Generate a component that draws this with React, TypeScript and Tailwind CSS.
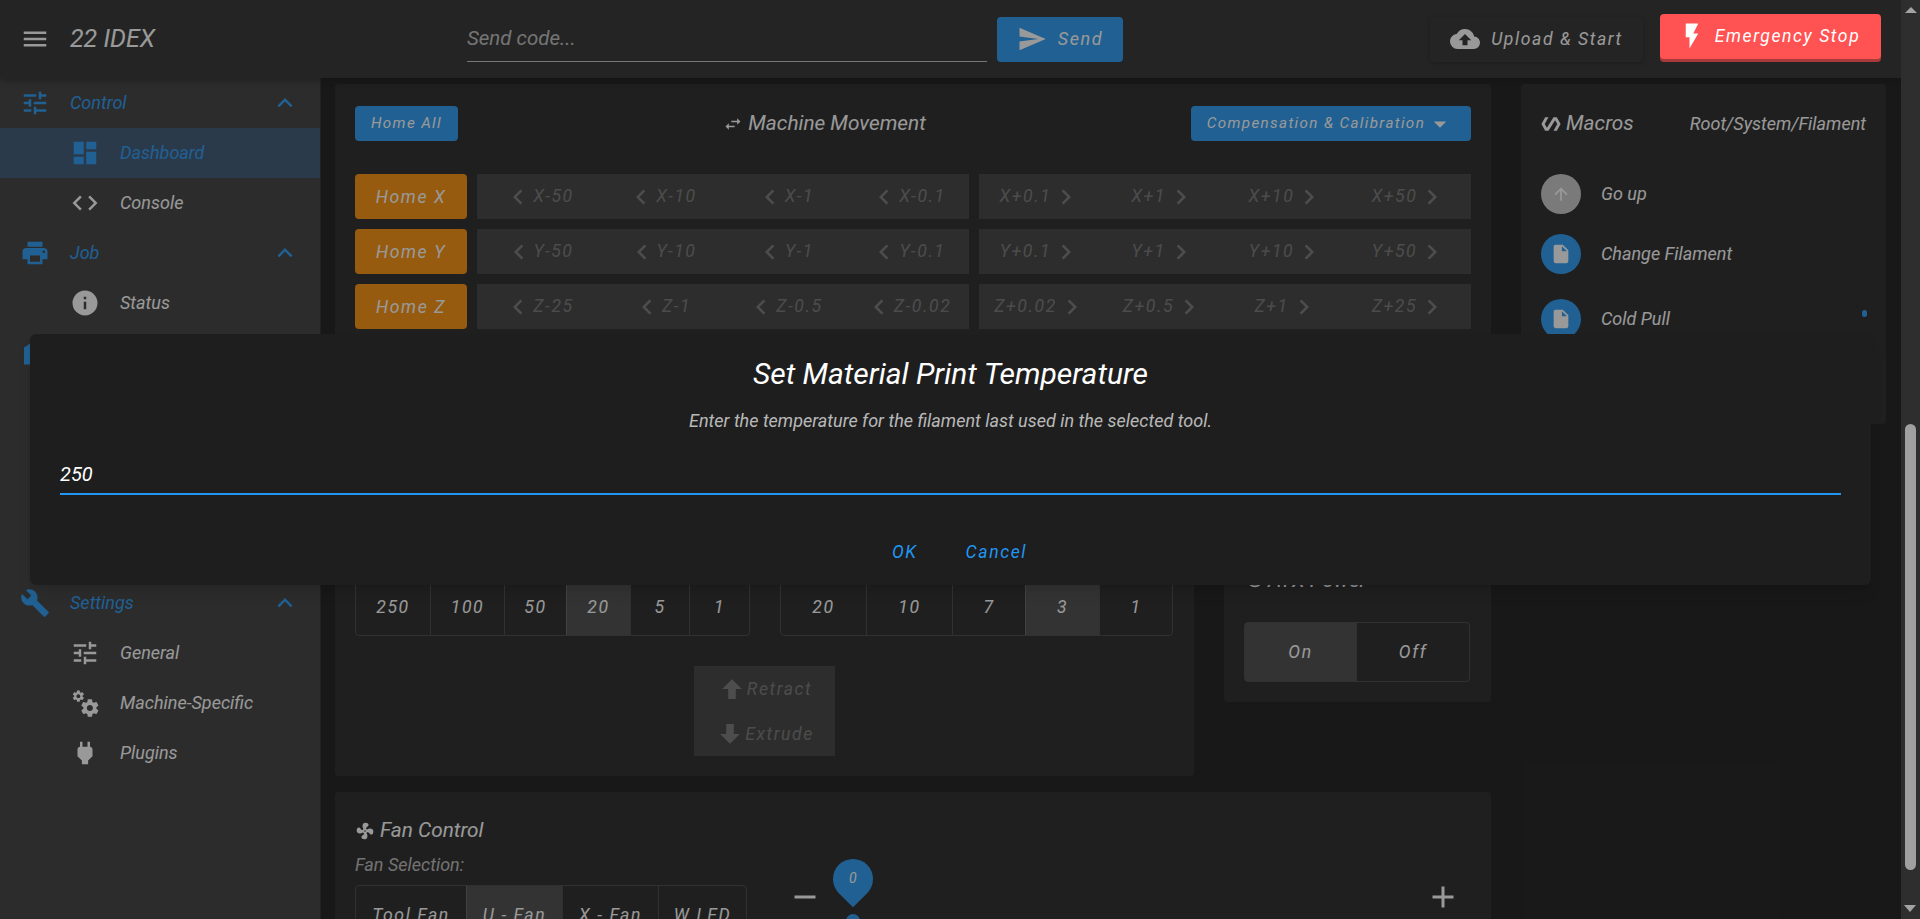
import React from "react";

// MDI icon paths
const mdi = {
  menu: "M3,6H21V8H3V6M3,11H21V13H3V11M3,16H21V18H3V16Z",
  tune: "M3,17V19H9V17H3M3,5V7H13V5H3M13,21V19H21V17H13V15H11V21H13M7,9V11H3V13H7V15H9V9H7M21,13V11H11V13H21M15,9H17V7H21V5H17V3H15V9Z",
  dashboard: "M13,3V9H21V3M13,21H21V11H13M3,21H11V15H3M3,13H11V3H3V13Z",
  code: "M14.6,16.6L19.2,12L14.6,7.4L16,6L22,12L16,18L14.6,16.6M9.4,16.6L4.8,12L9.4,7.4L8,6L2,12L8,18L9.4,16.6Z",
  printer: "M18,3H6V7H18M19,12A1,1 0 0,1 18,11A1,1 0 0,1 19,10A1,1 0 0,1 20,11A1,1 0 0,1 19,12M16,19H8V14H16M19,8H5A3,3 0 0,0 2,11V17H6V21H18V17H22V11A3,3 0 0,0 19,8Z",
  info: "M13,9H11V7H13M13,17H11V11H13M12,2A10,10 0 0,0 2,12A10,10 0 0,0 12,22A10,10 0 0,0 22,12A10,10 0 0,0 12,2Z",
  chevronUp: "M7.41,15.41L12,10.83L16.59,15.41L18,14L12,8L6,14L7.41,15.41Z",
  chevronLeft: "M15.41,16.58L10.83,12L15.41,7.41L14,6L8,12L14,18L15.41,16.58Z",
  chevronRight: "M8.59,16.58L13.17,12L8.59,7.41L10,6L16,12L10,18L8.59,16.58Z",
  wrench: "M22.7,19L13.6,9.9C14.5,7.6 14,4.9 12.1,3C10.1,1 7.1,0.6 4.7,1.7L9,6L6,9L1.6,4.7C0.4,7.1 0.9,10.1 2.9,12.1C4.8,14 7.5,14.5 9.8,13.6L18.9,22.7C19.3,23.1 19.9,23.1 20.3,22.7L22.6,20.4C23.1,20 23.1,19.3 22.7,19Z",
  cogs: "M15.9,18.45C17.25,18.45 18.35,17.35 18.35,16C18.35,14.65 17.25,13.55 15.9,13.55C14.54,13.55 13.45,14.65 13.45,16C13.45,17.35 14.54,18.45 15.9,18.45M21.1,16.68L22.58,17.84C22.71,17.95 22.75,18.13 22.66,18.29L21.26,20.71C21.17,20.86 21,20.92 20.83,20.86L19.09,20.16C18.73,20.44 18.33,20.67 17.91,20.85L17.64,22.7C17.62,22.87 17.47,23 17.3,23H14.5C14.32,23 14.18,22.87 14.15,22.7L13.89,20.85C13.46,20.67 13.07,20.44 12.71,20.16L10.96,20.86C10.81,20.92 10.62,20.86 10.54,20.71L9.14,18.29C9.05,18.13 9.09,17.95 9.22,17.84L10.7,16.68L10.65,16L10.7,15.31L9.22,14.16C9.09,14.05 9.05,13.86 9.14,13.71L10.54,11.29C10.62,11.13 10.81,11.07 10.96,11.13L12.71,11.84C13.07,11.56 13.46,11.32 13.89,11.15L14.15,9.29C14.18,9.13 14.32,9 14.5,9H17.3C17.47,9 17.62,9.13 17.64,9.29L17.91,11.15C18.33,11.32 18.73,11.56 19.09,11.84L20.83,11.13C21,11.07 21.17,11.13 21.26,11.29L22.66,13.71C22.75,13.86 22.71,14.05 22.58,14.16L21.1,15.31L21.15,16L21.1,16.68M6.69,8.07C7.56,8.07 8.26,7.37 8.26,6.5C8.26,5.63 7.56,4.92 6.69,4.92A1.58,1.58 0 0,0 5.11,6.5C5.11,7.37 5.82,8.07 6.69,8.07M10.03,6.94L11,7.68C11.07,7.75 11.09,7.87 11.03,7.97L10.13,9.53C10.08,9.63 9.96,9.67 9.86,9.63L8.74,9.18L8,9.62L7.81,10.81C7.79,10.92 7.7,11 7.59,11H5.79C5.67,11 5.58,10.92 5.56,10.81L5.4,9.62L4.64,9.18L3.5,9.63C3.41,9.67 3.3,9.63 3.24,9.53L2.34,7.97C2.28,7.87 2.31,7.75 2.39,7.68L3.34,6.94L3.31,6.5L3.34,6.06L2.39,5.32C2.31,5.25 2.28,5.13 2.34,5.03L3.24,3.47C3.3,3.37 3.41,3.33 3.5,3.37L4.63,3.82L5.4,3.38L5.56,2.19C5.58,2.08 5.67,2 5.79,2H7.59C7.7,2 7.79,2.08 7.81,2.19L8,3.38L8.74,3.82L9.86,3.37C9.96,3.33 10.08,3.37 10.13,3.47L11.03,5.03C11.09,5.13 11.07,5.25 11,5.32L10.03,6.06L10.06,6.5L10.03,6.94Z",
  plug: "M16,7V3H14V7H10V3H8V7H8C7,7 6,8 6,9V14.5L9.5,18V21H14.5V18L18,14.5V9C18,8 17,7 16,7Z",
  send: "M2,21L23,12L2,3V10L17,12L2,14V21Z",
  upload: "M14,13V17H10V13H7L12,8L17,13M19.35,10.03C18.67,6.59 15.64,4 12,4C9.11,4 6.6,5.59 5.35,8.03C2.34,8.36 0,10.9 0,14A6,6 0 0,0 6,20H19A5,5 0 0,0 24,15C24,12.36 21.95,10.22 19.35,10.03Z",
  flash: "M7,2V13H10V22L17,10H13L17,2H7Z",
  menuDown: "M7,10L12,15L17,10H7Z",
  file: "M13,9V3.5L18.5,9M6,2C4.89,2 4,2.89 4,4V20A2,2 0 0,0 6,22H18A2,2 0 0,0 20,20V8L14,2H6Z",
  arrowUp: "M13,20H11V8L5.5,13.5L4.08,12.08L12,4.16L19.92,12.08L18.5,13.5L13,8V20Z",
  swap: "M21,9L17,5V8H10V10H17V13M7,11L3,15L7,19V16H14V14H7V11Z",
  polymer: "M19,4H15L7.1,16.63L4.5,12L9,4H5L0.5,12L5,20H9L16.89,7.37L19.5,12L15,20H19L23.5,12L19,4Z",
  fan: "M12,11A1,1 0 0,0 11,12A1,1 0 0,0 12,13A1,1 0 0,0 13,12A1,1 0 0,0 12,11M12.5,2C17,2 17.11,5.57 14.75,6.75C13.76,7.24 13.32,8.29 13.13,9.22C13.61,9.42 14.03,9.73 14.35,10.13C18.05,8.13 22.03,8.92 22.03,12.5C22.03,17 18.46,17.1 17.28,14.73C16.78,13.74 15.72,13.3 14.79,13.11C14.59,13.59 14.28,14 13.88,14.34C15.87,18.03 15.08,22 11.5,22C7,22 6.91,18.42 9.27,17.24C10.25,16.75 10.69,15.71 10.89,14.79C10.4,14.59 9.97,14.27 9.65,13.87C5.96,15.85 2,15.07 2,11.5C2,7 5.56,6.89 6.74,9.26C7.24,10.25 8.29,10.68 9.22,10.87C9.41,10.39 9.73,9.97 10.14,9.65C8.15,5.96 8.94,2 12.5,2Z",
  arrowUpBold: "M15,20H9V12H4.16L12,4.16L19.84,12H15V20Z",
  arrowDownBold: "M9,4H15V12H19.84L12,19.84L4.16,12H9V4Z",
  minus: "M19,13H5V11H19V13Z",
  plus: "M19,13H13V19H11V13H5V11H11V5H13V11H19V13Z",
  // mostly behind the dialog, only its left sliver shows
  files: "M3.2,7.5L12,2L20.8,7.5V21.2H3.2Z",
  power: "M16.56,5.44L15.11,6.89C16.84,7.94 18,9.83 18,12A6,6 0 0,1 12,18A6,6 0 0,1 6,12C6,9.83 7.16,7.94 8.88,6.88L7.44,5.44C5.36,6.88 4,9.28 4,12A8,8 0 0,0 12,20A8,8 0 0,0 20,12C20,9.28 18.64,6.88 16.56,5.44M13,3H11V13H13",
};

function Icon({ d, className = "w-[30px] h-[30px]" }: { d: string; className?: string }) {
  return (
    <svg viewBox="0 0 24 24" fill="currentColor" className={`shrink-0 ${className}`}>
      <path d={d} />
    </svg>
  );
}

function NavGroup({ icon, label }: { icon: string; label: string }) {
  return (
    <div className="h-[50px] flex items-center pl-[20px] pr-[20px] text-[#2196f3]">
      <Icon d={icon} />
      <span className="ml-[20px] flex-1 text-lg">{label}</span>
      <Icon d={mdi.chevronUp} />
    </div>
  );
}

function NavItem({ icon, label, active }: { icon: string; label: string; active?: boolean }) {
  return (
    <div className={`h-[50px] flex items-center pl-[70px] ${active ? "bg-[#34506d] text-[#2196f3]" : "text-white"}`}>
      <Icon d={icon} />
      <span className="ml-[20px] text-lg">{label}</span>
    </div>
  );
}

const jogRows = [
  { axis: "X", down: ["-50", "-10", "-1", "-0.1"], up: ["+0.1", "+1", "+10", "+50"] },
  { axis: "Y", down: ["-50", "-10", "-1", "-0.1"], up: ["+0.1", "+1", "+10", "+50"] },
  { axis: "Z", down: ["-25", "-1", "-0.5", "-0.02"], up: ["+0.02", "+0.5", "+1", "+25"] },
];

function JogRow({ axis, down, up }: { axis: string; down: string[]; up: string[] }) {
  return (
    <div className="flex gap-[10px] h-[45px]">
      <button className="w-[112px] pt-[1px] rounded bg-[#fb8c00] text-white text-[17.6px] tracking-[.0892857em]">Home {axis}</button>
      <div className="flex-1 flex bg-[#393939] text-white/30">
        {down.map((v) => (
          <div key={v} className="flex-1 flex items-center justify-center text-[17.6px] tracking-[.0892857em]">
            <Icon d={mdi.chevronLeft} />
            {axis}
            {v}
          </div>
        ))}
      </div>
      <div className="flex-1 flex bg-[#393939] text-white/30">
        {up.map((v) => (
          <div key={v} className="flex-1 flex items-center justify-center text-[17.6px] tracking-[.0892857em]">
            {axis}
            {v}
            <Icon d={mdi.chevronRight} />
          </div>
        ))}
      </div>
    </div>
  );
}

function Toggle({ items, active, className }: { items: { label: string; w: string }[]; active: string; className: string }) {
  return (
    <div className={`flex border border-white/15 rounded ${className}`}>
      {items.map((it, i) => (
        <div
          key={it.label}
          className={`${it.w} flex items-center justify-center text-[17.6px] tracking-[.0892857em] text-white ${
            i > 0 ? "border-l border-white/15" : ""
          } ${it.label === active ? "bg-[#434343]" : ""}`}
        >
          {it.label}
        </div>
      ))}
    </div>
  );
}

function MacroRow({
  icon,
  label,
  grey,
  className,
  iconClass,
}: {
  icon: string;
  label: string;
  grey?: boolean;
  className: string;
  iconClass: string;
}) {
  return (
    <div className={`flex items-center ${className}`}>
      <div className={`w-10 h-10 rounded-full flex items-center justify-center text-white ${grey ? "bg-[#c6c6c6]" : "bg-[#2196f3]"}`}>
        <Icon d={icon} className={iconClass} />
      </div>
      <span className="ml-5 text-lg text-white">{label}</span>
    </div>
  );
}

export default function App() {
  return (
    <div className="relative flex w-[1920px] h-[919px] overflow-hidden italic font-['Roboto',sans-serif] bg-[#121212]">
      <div className="w-[1901px] h-full flex flex-col">
        {/* Toolbar */}
        <header className="relative shrink-0 h-[78px] bg-[#272727] flex items-center shadow-[0_2px_4px_-1px_rgba(0,0,0,.2),0_4px_5px_0_rgba(0,0,0,.14),0_1px_10px_0_rgba(0,0,0,.12)] text-white">
          <Icon d={mdi.menu} className="w-[30px] h-[30px] ml-[20px]" />
          <div className="ml-[20px] w-[397px] text-[25px]">22 IDEX</div>
          <div className="w-[520px] h-[45px] flex items-center border-b border-white/70 text-white/70 text-[20.5px]">Send code...</div>
          <button className="ml-[10px] w-[126px] h-[45px] rounded bg-[#2196f3] flex items-center justify-center text-lg tracking-[.0892857em]">
            <Icon d={mdi.send} className="w-[30px] h-[30px] mr-[11px]" />
            Send
          </button>
          <button className="ml-[307px] w-[213px] h-[45px] rounded bg-[#272727] shadow-[0_1px_4px_rgba(0,0,0,.4)] flex items-center justify-center text-[17.6px] tracking-[.0892857em]">
            <Icon d={mdi.upload} className="w-[30px] h-[30px] mr-[11px]" />
            Upload &amp; Start
          </button>
          <button className="relative z-20 ml-[17px] mb-[6px] w-[221px] h-[45px] rounded bg-[#ff5252] shadow-[0_3px_0_#a83a3a] flex items-center justify-center pr-[4px] text-[17.6px] tracking-[.0892857em]">
            <Icon d={mdi.flash} className="w-[30px] h-[30px] mr-[8px]" />
            Emergency Stop
          </button>
        </header>

        <div className="flex-1 flex min-h-0">
          {/* Sidebar */}
          <nav className="w-[321px] shrink-0 bg-[#363636] border-r border-[#222]">
            <NavGroup icon={mdi.tune} label="Control" />
            <NavItem icon={mdi.dashboard} label="Dashboard" active />
            <NavItem icon={mdi.code} label="Console" />
            <NavGroup icon={mdi.printer} label="Job" />
            <NavItem icon={mdi.info} label="Status" />
            <NavGroup icon={mdi.files} label="Files" />
            <div className="h-[200px]" />
            <NavGroup icon={mdi.wrench} label="Settings" />
            <NavItem icon={mdi.tune} label="General" />
            <NavItem icon={mdi.cogs} label="Machine-Specific" />
            <NavItem icon={mdi.plug} label="Plugins" />
          </nav>

          {/* Main */}
          <main className="flex-1 min-w-0 flex gap-[30px] pl-[14px] pt-[6px] overflow-hidden text-white">
            <div className="w-[1156px] shrink-0 flex flex-col gap-[16px]">
              <section className="h-[316px] shrink-0 rounded bg-[#1e1e1e] px-[20px] pt-[22px]">
                <div className="flex items-center justify-between h-[35px]">
                  <button className="w-[103px] h-[35px] rounded bg-[#2196f3] text-[15.2px] tracking-[.0892857em]">Home All</button>
                  <div className="flex items-center text-[20.8px]">
                    <Icon d={mdi.swap} className="w-5 h-5 mr-[5px]" />
                    Machine Movement
                  </div>
                  <button className="w-[280px] h-[35px] rounded bg-[#2196f3] flex items-center justify-center text-[15.2px] tracking-[.0892857em]">
                    Compensation &amp; Calibration
                    <Icon d={mdi.menuDown} />
                  </button>
                </div>
                <div className="mt-[33px] flex flex-col gap-[10px]">
                  {jogRows.map((r) => (
                    <JogRow key={r.axis} {...r} />
                  ))}
                </div>
              </section>

              <div className="h-[360px] shrink-0 flex items-start gap-[30px]">
                <section className="w-[859px] h-full rounded bg-[#1e1e1e] px-[20px] pb-[20px] flex flex-col justify-end">
                  <div className="flex gap-[30px]">
                    <Toggle
                      className="w-[395px] h-[58px]"
                      active="20"
                      items={[
                        { label: "250", w: "w-[74px]" },
                        { label: "100", w: "w-[74px]" },
                        { label: "50", w: "w-[62px]" },
                        { label: "20", w: "w-[64px]" },
                        { label: "5", w: "w-[59px]" },
                        { label: "1", w: "w-[60px]" },
                      ]}
                    />
                    <Toggle
                      className="w-[393px] h-[58px]"
                      active="3"
                      items={[
                        { label: "20", w: "w-[85px]" },
                        { label: "10", w: "w-[86px]" },
                        { label: "7", w: "w-[73px]" },
                        { label: "3", w: "w-[74px]" },
                        { label: "1", w: "w-[73px]" },
                      ]}
                    />
                  </div>
                  <div className="mt-[30px] ml-[339px] w-[141px] h-[90px] bg-[#393939] text-white/30 text-[17.6px] tracking-[.0892857em]">
                    <div className="h-[45px] pt-[1px] flex items-center justify-center">
                      <Icon d={mdi.arrowUpBold} />
                      Retract
                    </div>
                    <div className="h-[45px] pt-[1px] flex items-center justify-center">
                      <Icon d={mdi.arrowDownBold} />
                      Extrude
                    </div>
                  </div>
                </section>
                <section className="w-[267px] h-[286px] rounded bg-[#1e1e1e] px-[20px] pb-[20px] flex flex-col justify-end">
                  <div className="flex items-center text-[20.8px] mb-[26px]">
                    <Icon d={mdi.power} className="w-[22px] h-[22px] mr-[2px]" />
                    ATX Power
                  </div>
                  <Toggle
                    className="w-[226px] h-[60px]"
                    active="On"
                    items={[
                      { label: "On", w: "w-[111px]" },
                      { label: "Off", w: "w-[113px]" },
                    ]}
                  />
                </section>
              </div>

              <section className="h-[140px] shrink-0 rounded bg-[#1e1e1e] px-[20px] pt-[27px]">
                <div className="flex items-center text-[20.8px] h-6">
                  <Icon d={mdi.fan} className="w-5 h-5 mr-[5px]" />
                  Fan Control
                </div>
                <div className="mt-[10px] text-lg leading-[24px] text-white/70">Fan Selection:</div>
                <div className="flex">
                  <Toggle
                    className="mt-[8px] w-[392px] h-[60px] shrink-0"
                    active="U - Fan"
                    items={[
                      { label: "Tool Fan", w: "w-[110px]" },
                      { label: "U - Fan", w: "w-[96px]" },
                      { label: "X - Fan", w: "w-[96px]" },
                      { label: "W LED", w: "w-[88px]" },
                    ]}
                  />
                  <div className="relative flex-1 flex justify-between items-start pl-[40px] pr-[10px]">
                    <Icon d={mdi.minus} className="w-9 h-9 mt-[2px]" />
                    <Icon d={mdi.plus} className="w-9 h-9 mt-[2px]" />
                    {/* slider thumb label */}
                    <div className="absolute left-[86px] top-[-18px] w-10 h-10 rounded-full rounded-br-none rotate-45 bg-[#2196f3]" />
                    <span className="absolute left-[102px] top-[-9px] text-sm leading-5">0</span>
                    <div className="absolute left-[99px] top-[37px] w-[14px] h-[14px] rounded-full bg-[#2196f3]" />
                  </div>
                </div>
              </section>
            </div>

            <section className="w-[365px] h-[340px] shrink-0 rounded bg-[#1e1e1e] px-[20px] pt-[22px] relative">
              <div className="flex items-center justify-between h-[35px] text-lg">
                <div className="flex items-center text-[20.8px]">
                  <Icon d={mdi.polymer} className="w-5 h-5 mr-[5px]" />
                  Macros
                </div>
                <span className="text-lg">Root/System/Filament</span>
              </div>
              <MacroRow icon={mdi.arrowUp} iconClass="w-5 h-5" label="Go up" grey className="mt-[33px]" />
              <MacroRow icon={mdi.file} iconClass="w-[22px] h-[22px]" label="Change Filament" className="mt-[20px]" />
              <MacroRow icon={mdi.file} iconClass="w-[22px] h-[22px]" label="Cold Pull" className="mt-[25px]" />
              <div className="absolute left-[341px] top-[226px] w-[5px] h-[7px] rounded-full bg-[#2196f3]" />
            </section>
          </main>
        </div>
      </div>

      {/* Scrollbar */}
      <div className="relative w-[19px] h-full bg-[#2e2e2e]">
        <div className="absolute left-[4px] top-[7px] w-0 h-0 border-x-[6px] border-x-transparent border-b-[6px] border-b-[#a3a3a3]" />
        <div className="absolute left-[4px] top-[424px] w-[11px] h-[446px] rounded-full bg-[#a0a0a0]" />
        <div className="absolute left-[3px] top-[905px] w-0 h-0 border-x-[6.5px] border-x-transparent border-t-[7px] border-t-[#a3a3a3]" />
      </div>

      {/* Dialog overlay */}
      <div className="absolute left-0 top-0 w-[1901px] h-full z-10 bg-[#212121]/46 flex items-center justify-center">
        <div className="w-[1841px] h-[251px] rounded-md bg-[#1e1e1e] shadow-lg text-white flex flex-col">
          <h2 className="pt-[20px] text-center text-[30px] leading-[40px]">Set Material Print Temperature</h2>
          <p className="mt-[15px] text-center text-lg leading-6 text-white/70">Enter the temperature for the filament last used in the selected tool.</p>
          <div className="mx-[30px] mt-[22px] h-[40px] flex items-center border-b-2 border-[#2196f3] text-xl">250</div>
          <div className="flex justify-center gap-[48px] mt-[44px] pl-[18px] text-[#2196f3] text-[17.6px] tracking-[.0892857em]">
            <span>OK</span>
            <span>Cancel</span>
          </div>
        </div>
      </div>
    </div>
  );
}
